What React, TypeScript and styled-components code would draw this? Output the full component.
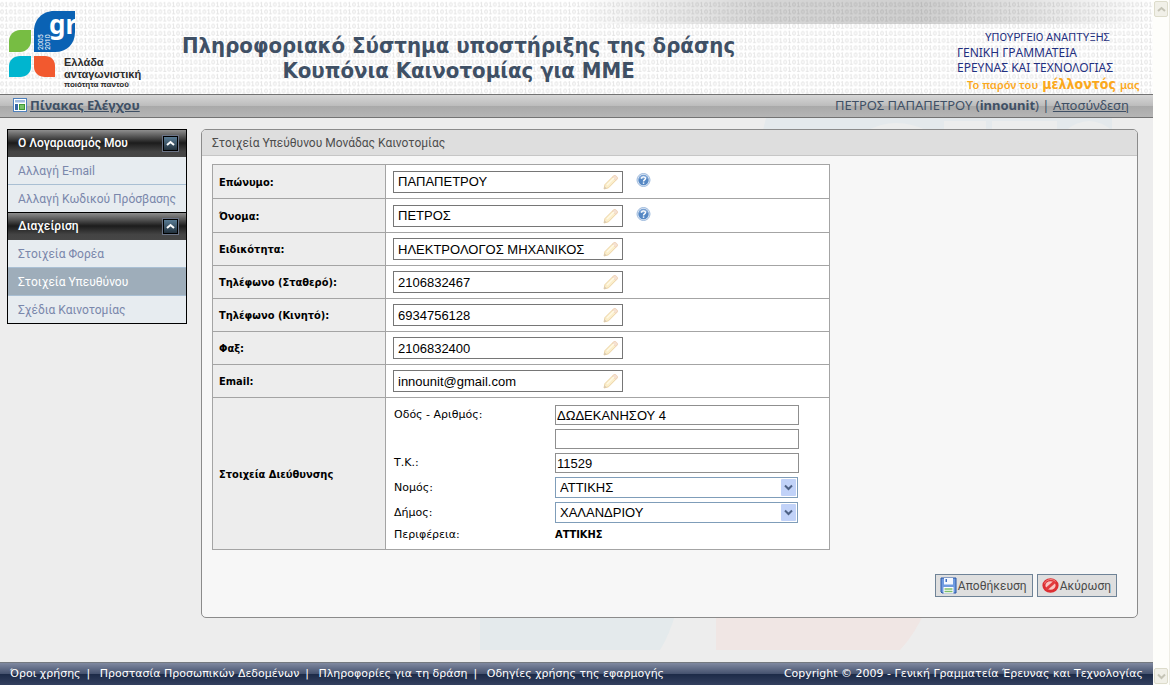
import React from "react";
import styled, { createGlobalStyle } from "styled-components";

const Global = createGlobalStyle`
  * { box-sizing: border-box; }
  body { margin: 0; background: #ededed; }
`;

const noto = `"Noto Sans", "Open Sans", sans-serif`;
const roboto = `Roboto, "Noto Sans", sans-serif`;
const condensed = `"DejaVu Sans Condensed", "DejaVu Sans", sans-serif`;
const verdana = `"DejaVu Sans", sans-serif`;
const arial = `"Liberation Sans", Arial, sans-serif`;

const Screen = styled.div`
  display: flex;
  min-height: 100vh;
  font-family: ${roboto};
`;

const Page = styled.div`
  flex: 1;
  min-width: 0;
  display: flex;
  flex-direction: column;
`;

const Header = styled.header`
  position: relative;
  display: flex;
  justify-content: space-between;
  height: 94px;
  background: #fff;
`;

const HeaderTexture = styled.svg`
  position: absolute;
  inset: 0;
  width: 100%;
  height: 100%;
`;

const HeaderShade = styled.div`
  position: absolute;
  top: 0;
  left: 50%;
  right: 0;
  height: 24px;
  background: linear-gradient(90deg, rgba(0, 0, 0, 0) 0%, rgba(0, 0, 0, 0.16) 32%, rgba(0, 0, 0, 0.19) 60%, rgba(0, 0, 0, 0.1) 80%, rgba(0, 0, 0, 0) 100%);
`;

const Logo = styled.svg`
  position: relative;
  flex: none;
  width: 174px;
  height: 94px;
`;

const Title = styled.h1`
  position: relative;
  margin: 0 0 0 8px;
  padding-top: 33px;
  font-family: ${condensed};
  font-size: 22px;
  line-height: 25px;
  font-weight: bold;
  color: #3f5065;
  text-align: center;
  white-space: nowrap;
`;

const Ministry = styled.div`
  position: relative;
  margin-left: auto;
  width: 196px;
  padding-top: 30px;
  font-family: ${noto};
  font-size: 12px;
  line-height: 15px;
  color: #1f2f80;
  white-space: nowrap;
`;

const MinistryTop = styled.div`
  padding-left: 28px;
  font-family: ${roboto};
  font-size: 11px;
`;

const Slogan = styled.div`
  display: flex;
  align-items: baseline;
  gap: 4px;
  padding-left: 10px;
  font-size: 11px;
  line-height: 19px;
  font-weight: 600;
  color: #fba81c;
`;

const SloganWord = styled.strong`
  font-family: ${condensed};
  font-size: 14px;
`;

const TopBar = styled.nav`
  display: flex;
  align-items: center;
  justify-content: space-between;
  height: 24px;
  padding: 0 24px 2px 13px;
  border-top: 1px solid #737373;
  border-bottom: 1px solid #737373;
  background: linear-gradient(#d6d6d6, #bcbcbc 50%, #a9a9a9 50%, #b5b5b5);
  font-family: ${noto};
  font-size: 13px;
  line-height: 20px;
  color: #3f5065;
`;

const BarLink = styled.a<{ $strong?: boolean }>`
  color: #3f5065;
  font-weight: ${(p) => (p.$strong ? "bold" : "normal")};
`;

const BarGroup = styled.div`
  display: flex;
  align-items: center;
  gap: 3px;
`;

const Body = styled.div`
  position: relative;
  flex: 1;
  display: flex;
  align-items: flex-start;
  gap: 14px;
  padding: 11px 15px 44px 7px;
`;

const Watermark = styled.svg`
  position: absolute;
  top: 0;
  left: 480px;
  width: 660px;
  height: 532px;
`;

const Sidebar = styled.aside`
  position: relative;
  flex: none;
  width: 180px;
  border: 1px solid #000;
  border-top: 0;
`;

const MenuHead = styled.h2`
  display: flex;
  align-items: center;
  justify-content: space-between;
  height: 28px;
  margin: 0;
  padding: 0 7px 1px 10px;
  border-top: 1px solid #000;
  background: linear-gradient(#8e8e8e, #1c1c1c 48%, #444 80%, #464646);
  font-size: 12px;
  font-weight: 500;
  color: #fff;
`;

const Collapse = styled.button`
  display: flex;
  align-items: center;
  justify-content: center;
  width: 17px;
  height: 17px;
  padding: 0;
  border: 1px solid #6a7386;
  outline: 1px solid #000;
  outline-offset: -2px;
  background: linear-gradient(#5d819b, #1d2b36);
`;

const MenuList = styled.ul`
  margin: 0;
  padding: 0;
  list-style: none;
`;

const MenuItem = styled.li`
  & + & { border-top: 1px solid #a9bfd3; }
`;

const MenuLink = styled.a<{ $active?: boolean }>`
  display: block;
  height: 27px;
  padding-left: 10px;
  font-size: 12px;
  line-height: 28px;
  white-space: nowrap;
  text-decoration: none;
  color: ${(p) => (p.$active ? "#fff" : "#7a87ab")};
  background: ${(p) => (p.$active ? "#9eadba" : "#e7ecf0")};
`;

const Panel = styled.main`
  position: relative;
  flex: 1;
  min-width: 0;
  border: 1px solid #8b8b8b;
  border-radius: 5px;
  background: #f7f7f7;
  overflow: hidden;
`;

const PanelTitle = styled.h2`
  height: 26px;
  margin: 0;
  padding-left: 10px;
  border-bottom: 1px solid #c6c6c6;
  background: #dedede;
  font-size: 12px;
  line-height: 26px;
  font-weight: normal;
  color: #4d4d4d;
`;

const FormTable = styled.table`
  width: 618px;
  margin: 8px 10px 24px;
  border-collapse: collapse;
  background: #fff;
`;

const FieldName = styled.th`
  width: 173px;
  padding: 1px 6px 0;
  border: 1px solid #a4a4a4;
  background: #ededed;
  font-family: ${condensed};
  font-size: 11px;
  font-weight: bold;
  text-align: left;
  color: #000;
`;

const FieldCell = styled.td<{ $tall?: boolean }>`
  height: ${(p) => (p.$tall ? 34 : 33)}px;
  padding: 0 7px;
  border: 1px solid #a4a4a4;
`;

const FieldLine = styled.div`
  display: flex;
  align-items: center;
  gap: 13px;
`;

const InputBox = styled.div`
  display: flex;
  align-items: center;
  width: 230px;
  height: 22px;
  padding: 0 3px 0 4px;
  border: 1px solid #767676;
  background: #fff;
`;

const PlainInput = styled.input`
  flex: 1;
  min-width: 0;
  padding: 0;
  border: 0;
  outline: 0;
  background: none;
  font-family: ${arial};
  font-size: 13px;
  color: #000;
`;

const HelpButton = styled.button`
  width: 16px;
  height: 16px;
  margin-bottom: 4px;
  padding: 0;
  border: 0;
  background: none;
`;

const Address = styled.div`
  display: grid;
  grid-template-columns: 161px 244px;
  align-items: center;
  row-gap: 4px;
  padding: 7px 0 6px 1px;
  font-family: ${verdana};
  font-size: 11px;
  line-height: 16px;
  color: #000;
`;

const AddressInput = styled.input`
  grid-column: 2;
  height: 20px;
  padding: 0 1px;
  border: 1px solid #8f8f8f;
  border-radius: 0;
  background: #fff;
  font-family: ${arial};
  font-size: 13px;
  color: #000;
`;

const SelectBox = styled.div`
  position: relative;
  width: 243px;
  height: 21px;
`;

const Select = styled.select`
  appearance: none;
  display: block;
  width: 100%;
  height: 100%;
  padding: 0 20px 0 4px;
  border: 1px solid #7f9db9;
  border-radius: 0;
  background: #fff;
  font-family: ${arial};
  font-size: 13px;
  color: #000;
`;

const Arrow = styled.svg`
  position: absolute;
  top: 2px;
  right: 2px;
  pointer-events: none;
`;

const Region = styled.strong`
  font-family: ${condensed};
`;

const Actions = styled.div`
  display: flex;
  justify-content: flex-end;
  gap: 4px;
  padding: 0 20px 20px;
`;

const ActionButton = styled.button`
  display: flex;
  align-items: center;
  gap: 1px;
  height: 23px;
  padding: 0 5px 0 4px;
  border: 1px solid #6f8397;
  background: #dfdfdf;
  font-family: ${roboto};
  font-size: 12px;
  color: #4a4a4a;
`;

const Footer = styled.footer`
  display: flex;
  justify-content: space-between;
  height: 23px;
  padding: 0 10px;
  border-top: 1px solid #757a80;
  background: linear-gradient(#8089a0, #44516e 50%, #1c2a47 50%, #33405f);
  font-family: ${verdana};
  font-size: 11px;
  line-height: 21px;
  color: #fff;
  white-space: nowrap;
`;

const FooterLinks = styled.div`
  display: flex;
  gap: 6px;
`;

const FooterLink = styled.a`
  color: #fff;
  text-decoration: none;
`;

const ScrollTrack = styled.div`
  flex: none;
  display: flex;
  flex-direction: column;
  justify-content: space-between;
  width: 17px;
  padding: 1px 2px 1px 1px;
  border-right: 1px solid #eeede5;
  background: #fefefb;
`;

const ScrollButton = styled.button`
  display: flex;
  align-items: center;
  justify-content: center;
  width: 14px;
  height: 16px;
  padding: 0;
  border: 1px solid #dddccb;
  border-radius: 2px;
  background: #f1f0e8;
`;

const PencilIcon = () => (
  <svg width="16" height="16" viewBox="0 0 16 16" aria-hidden="true">
    <path d="M1 15l1-4.500 8.500-8.500c1.500-1.200 4.500 1.500 3.500 3.200L5.500 13.800z" fill="#fbeecb" stroke="#ecd3a4" />
    <path d="M9.500 3l1.500-1.300c1.500-1 4.200 1.600 3.200 3.200l-1.500 1.500z" fill="#f6e2d3" stroke="#eccdb4" strokeWidth=".7" />
    <path d="M4 11l7-7" stroke="#fff9e6" strokeWidth="1.500" fill="none" />
    <path d="M1 15l.6-2.500 1.900 1.700z" fill="#cfc4b4" />
  </svg>
);

const HelpIcon = () => (
  <svg width="16" height="16" viewBox="0 0 16 16" aria-hidden="true">
    <circle cx="7.500" cy="8" r="6.500" fill="#dfe9f5" stroke="#9db9dc" />
    <circle cx="7.500" cy="8" r="5.200" fill="#5688c4" />
    <path d="M3 6.500a4.600 4 0 0 1 9 0z" fill="#86abd9" />
    <path d="M5.500 6.700c0-2.400 4-2.400 4-.2 0 1.400-2 1.400-2 3" fill="none" stroke="#fff" strokeWidth="1.400" />
    <rect x="6.800" y="10.400" width="1.500" height="1.400" fill="#fff" />
  </svg>
);

const DashboardIcon = () => (
  <svg width="14" height="14" viewBox="0 0 14 14" aria-hidden="true">
    <rect x=".5" y=".5" width="13" height="13" fill="#fff" stroke="#4f81bd" />
    <rect x="2" y="2" width="10" height="2.500" fill="#9ebbe0" />
    <rect x="2" y="6" width="3" height="6" fill="#3767a8" />
    <rect x="6.500" y="6.500" width="5" height="5" fill="#79c36a" stroke="#3f9b35" />
  </svg>
);

const SaveIcon = () => (
  <svg width="17" height="17" viewBox="0 0 17 17" aria-hidden="true">
    <path d="M1 1h15v15H2l-1-1z" fill="#6f9be0" stroke="#2a56a5" />
    <rect x="4" y="1" width="9" height="6.500" fill="#f4f8ff" />
    <rect x="5.500" y="2" width="1.500" height="3" fill="#3f6fc0" />
    <rect x="3.500" y="10" width="10" height="6.500" fill="#fff" />
    <path d="M4.500 12h8M4.500 14.500h8" stroke="#7fbf6c" strokeWidth="1.500" />
  </svg>
);

const CancelIcon = () => (
  <svg width="17" height="17" viewBox="0 0 17 17" aria-hidden="true">
    <ellipse cx="8.500" cy="8.500" rx="6.600" ry="5.700" fill="#f9c5c2" stroke="#dc2f33" strokeWidth="3" />
    <path d="M4 12.500l9-8" stroke="#e23a3d" strokeWidth="3" />
    <path d="M2.500 6.500c1.500-4 8-5.500 11-2" fill="none" stroke="#f58a86" />
  </svg>
);

const Chevron = ({ up, color }: { up?: boolean; color: string }) => (
  <svg width="9" height="7" viewBox="0 0 9 7" aria-hidden="true">
    <path d={up ? "M1 5l3.500-3L8 5" : "M1 1.500l3.500 3.500L8 1.500"} fill="none" stroke={color} strokeWidth="2" />
  </svg>
);

const GreeceLogo = () => (
  <Logo viewBox="0 0 174 94" role="img" aria-label="gr 2005 2010">
    <defs>
      <clipPath id="leaf">
        <path d="M34 52V31c0-11 8-20 20-20h21v21c0 12-8 20-20 20z" />
      </clipPath>
    </defs>
    <path d="M34 52V31c0-11 8-20 20-20h21v21c0 12-8 20-20 20z" fill="#0a62b4" />
    <path d="M9 52V41c0-6 5-11 11-11h11v11c0 6-5 11-11 11z" fill="#77bd43" />
    <path d="M9 77V66c0-6 5-10 11-10h11v11c0 6-5 10-11 10z" fill="#00b5cf" />
    <path d="M34 56h11c6 0 10 4 10 10v11H45c-6 0-11-4-11-10z" fill="#f2592f" />
    <g clipPath="url(#leaf)">
      <text x="49" y="34" fontFamily={noto} fontSize="26" fontWeight="bold" fill="#fff">gr</text>
    </g>
    <g fontFamily={roboto} fontSize="7" fill="#fff">
      <text transform="translate(43 50) rotate(-90)">2005</text>
      <text transform="translate(50 50) rotate(-90)">2010</text>
    </g>
    <g fontFamily={arial} fontWeight="bold" fill="#2b2b2b">
      <text x="64" y="66" fontSize="11">Ελλάδα</text>
      <text x="64" y="78" fontSize="11">ανταγωνιστική</text>
      <text x="64" y="87" fontSize="8">ποιότητα παντού</text>
    </g>
  </Logo>
);

const contactFields = [
  { id: "surname", label: "Επώνυμο:", value: "ΠΑΠΑΠΕΤΡΟΥ", help: true },
  { id: "name", label: "Όνομα:", value: "ΠΕΤΡΟΣ", help: true },
  { id: "job", label: "Ειδικότητα:", value: "ΗΛΕΚΤΡΟΛΟΓΟΣ ΜΗΧΑΝΙΚΟΣ" },
  { id: "phone", label: "Τηλέφωνο (Σταθερό):", value: "2106832467" },
  { id: "mobile", label: "Τηλέφωνο (Κινητό):", value: "6934756128" },
  { id: "fax", label: "Φαξ:", value: "2106832400" },
  { id: "email", label: "Email:", value: "innounit@gmail.com" },
];

const menus = [
  { title: "Ο Λογαριασμός Μου", items: ["Αλλαγή E-mail", "Αλλαγή Κωδικού Πρόσβασης"] },
  { title: "Διαχείριση", items: ["Στοιχεία Φορέα", "Στοιχεία Υπευθύνου", "Σχέδια Καινοτομίας"] },
];
const activeItem = "Στοιχεία Υπευθύνου";

const footerLinks = ["Όροι χρήσης", "Προστασία Προσωπικών Δεδομένων", "Πληροφορίες για τη δράση", "Οδηγίες χρήσης της εφαρμογής"];

const AddressSelect = ({ id, value }: { id: string; value: string }) => (
  <SelectBox>
    <Select id={id} defaultValue={value}>
      <option>{value}</option>
    </Select>
    <Arrow width="15" height="17" viewBox="0 0 15 17" aria-hidden="true">
      <rect width="15" height="17" rx="1" fill="#c1d2f8" />
      <path d="M4 6.500l3.500 3.500L11 6.500" fill="none" stroke="#4d6185" strokeWidth="2" />
    </Arrow>
  </SelectBox>
);

export default function App() {
  return (
    <Screen>
      <Global />
      <Page>
        <Header>
          <HeaderTexture aria-hidden="true">
            <defs>
              <pattern id="binary" width="8.800" height="7.200" patternUnits="userSpaceOnUse">
                <ellipse cx="2" cy="4.500" rx="1.300" ry="2" fill="none" stroke="#e4e4e4" />
                <path d="M5.200 3.200l1.200-.8v4.200M5 6.600h3" fill="none" stroke="#e6e6e6" />
              </pattern>
            </defs>
            <rect width="100%" height="100%" fill="url(#binary)" />
          </HeaderTexture>
          <HeaderShade />
          <GreeceLogo />
          <Title>
            Πληροφοριακό Σύστημα υποστήριξης της δράσης
            <br />
            Κουπόνια Καινοτομίας για ΜΜΕ
          </Title>
          <Ministry>
            <MinistryTop>ΥΠΟΥΡΓΕΙΟ ΑΝΑΠΤΥΞΗΣ</MinistryTop>
            <div>ΓΕΝΙΚΗ ΓΡΑΜΜΑΤΕΙΑ</div>
            <div>ΕΡΕΥΝΑΣ ΚΑΙ ΤΕΧΝΟΛΟΓΙΑΣ</div>
            <Slogan>
              <span>Το παρόν του</span>
              <SloganWord>μέλλοντός</SloganWord>
              <span>μας</span>
            </Slogan>
          </Ministry>
        </Header>

        <TopBar>
          <BarGroup>
            <DashboardIcon />
            <BarLink $strong href="#dashboard">Πίνακας Ελέγχου</BarLink>
          </BarGroup>
          <div>
            ΠΕΤΡΟΣ ΠΑΠΑΠΕΤΡΟΥ (<b>innounit</b>) | <BarLink href="#logout">Αποσύνδεση</BarLink>
          </div>
        </TopBar>

        <Body>
          <Watermark viewBox="0 0 660 532" aria-hidden="true">
            <path d="M0 440H205Q200 500 180 532H0z" fill="#e4eaec" />
            <path d="M236 440H460Q450 500 420 532H236z" fill="#f0e6e4" />
            <path d="M286 0H632V40H276z" fill="#e4e9ec" />
            <path d="M385 14q30-18 65 0zM464 3h42v11h-42zM512 3h65v11h-65zM584 14q25-22 50 0z" fill="#eceded" />
          </Watermark>
          <Sidebar>
            {menus.map((menu) => (
              <section key={menu.title}>
                <MenuHead>
                  {menu.title}
                  <Collapse type="button" aria-label={menu.title}>
                    <Chevron up color="#fff" />
                  </Collapse>
                </MenuHead>
                <MenuList>
                  {menu.items.map((item) => (
                    <MenuItem key={item}>
                      <MenuLink href="#menu" $active={item === activeItem}>{item}</MenuLink>
                    </MenuItem>
                  ))}
                </MenuList>
              </section>
            ))}
          </Sidebar>

          <Panel>
            <PanelTitle>Στοιχεία Υπεύθυνου Μονάδας Καινοτομίας</PanelTitle>
            <FormTable>
              <tbody>
                {contactFields.map((f) => (
                  <tr key={f.id}>
                    <FieldName scope="row">
                      <label htmlFor={f.id}>{f.label}</label>
                    </FieldName>
                    <FieldCell $tall={f.help}>
                      <FieldLine>
                        <InputBox>
                          <PlainInput id={f.id} defaultValue={f.value} />
                          <PencilIcon />
                        </InputBox>
                        {f.help && (
                          <HelpButton type="button" aria-label={f.label}>
                            <HelpIcon />
                          </HelpButton>
                        )}
                      </FieldLine>
                    </FieldCell>
                  </tr>
                ))}
                <tr>
                  <FieldName scope="row">Στοιχεία Διεύθυνσης</FieldName>
                  <FieldCell>
                    <Address>
                      <label htmlFor="street">Οδός - Αριθμός:</label>
                      <AddressInput id="street" defaultValue="ΔΩΔΕΚΑΝΗΣΟΥ 4" />
                      <AddressInput id="street2" aria-label="Οδός - Αριθμός" />
                      <label htmlFor="zip">Τ.Κ.:</label>
                      <AddressInput id="zip" defaultValue="11529" />
                      <label htmlFor="prefecture">Νομός:</label>
                      <AddressSelect id="prefecture" value="ΑΤΤΙΚΗΣ" />
                      <label htmlFor="town">Δήμος:</label>
                      <AddressSelect id="town" value="ΧΑΛΑΝΔΡΙΟΥ" />
                      <span>Περιφέρεια:</span>
                      <Region>ΑΤΤΙΚΗΣ</Region>
                    </Address>
                  </FieldCell>
                </tr>
              </tbody>
            </FormTable>
            <Actions>
              <ActionButton type="button"><SaveIcon />Αποθήκευση</ActionButton>
              <ActionButton type="button"><CancelIcon />Ακύρωση</ActionButton>
            </Actions>
          </Panel>
        </Body>

        <Footer>
          <FooterLinks>
            {footerLinks.map((text, i) => (
              <React.Fragment key={text}>
                <FooterLink href="#info">{text}</FooterLink>
                {i < footerLinks.length - 1 && <span>|&nbsp;</span>}
              </React.Fragment>
            ))}
          </FooterLinks>
          <span>Copyright © 2009 - Γενική Γραμματεία Έρευνας και Τεχνολογίας</span>
        </Footer>
      </Page>
      <ScrollTrack>
        <ScrollButton type="button" aria-label="Πάνω"><Chevron up color="#c5c4b6" /></ScrollButton>
        <ScrollButton type="button" aria-label="Κάτω"><Chevron color="#c5c4b6" /></ScrollButton>
      </ScrollTrack>
    </Screen>
  );
}
